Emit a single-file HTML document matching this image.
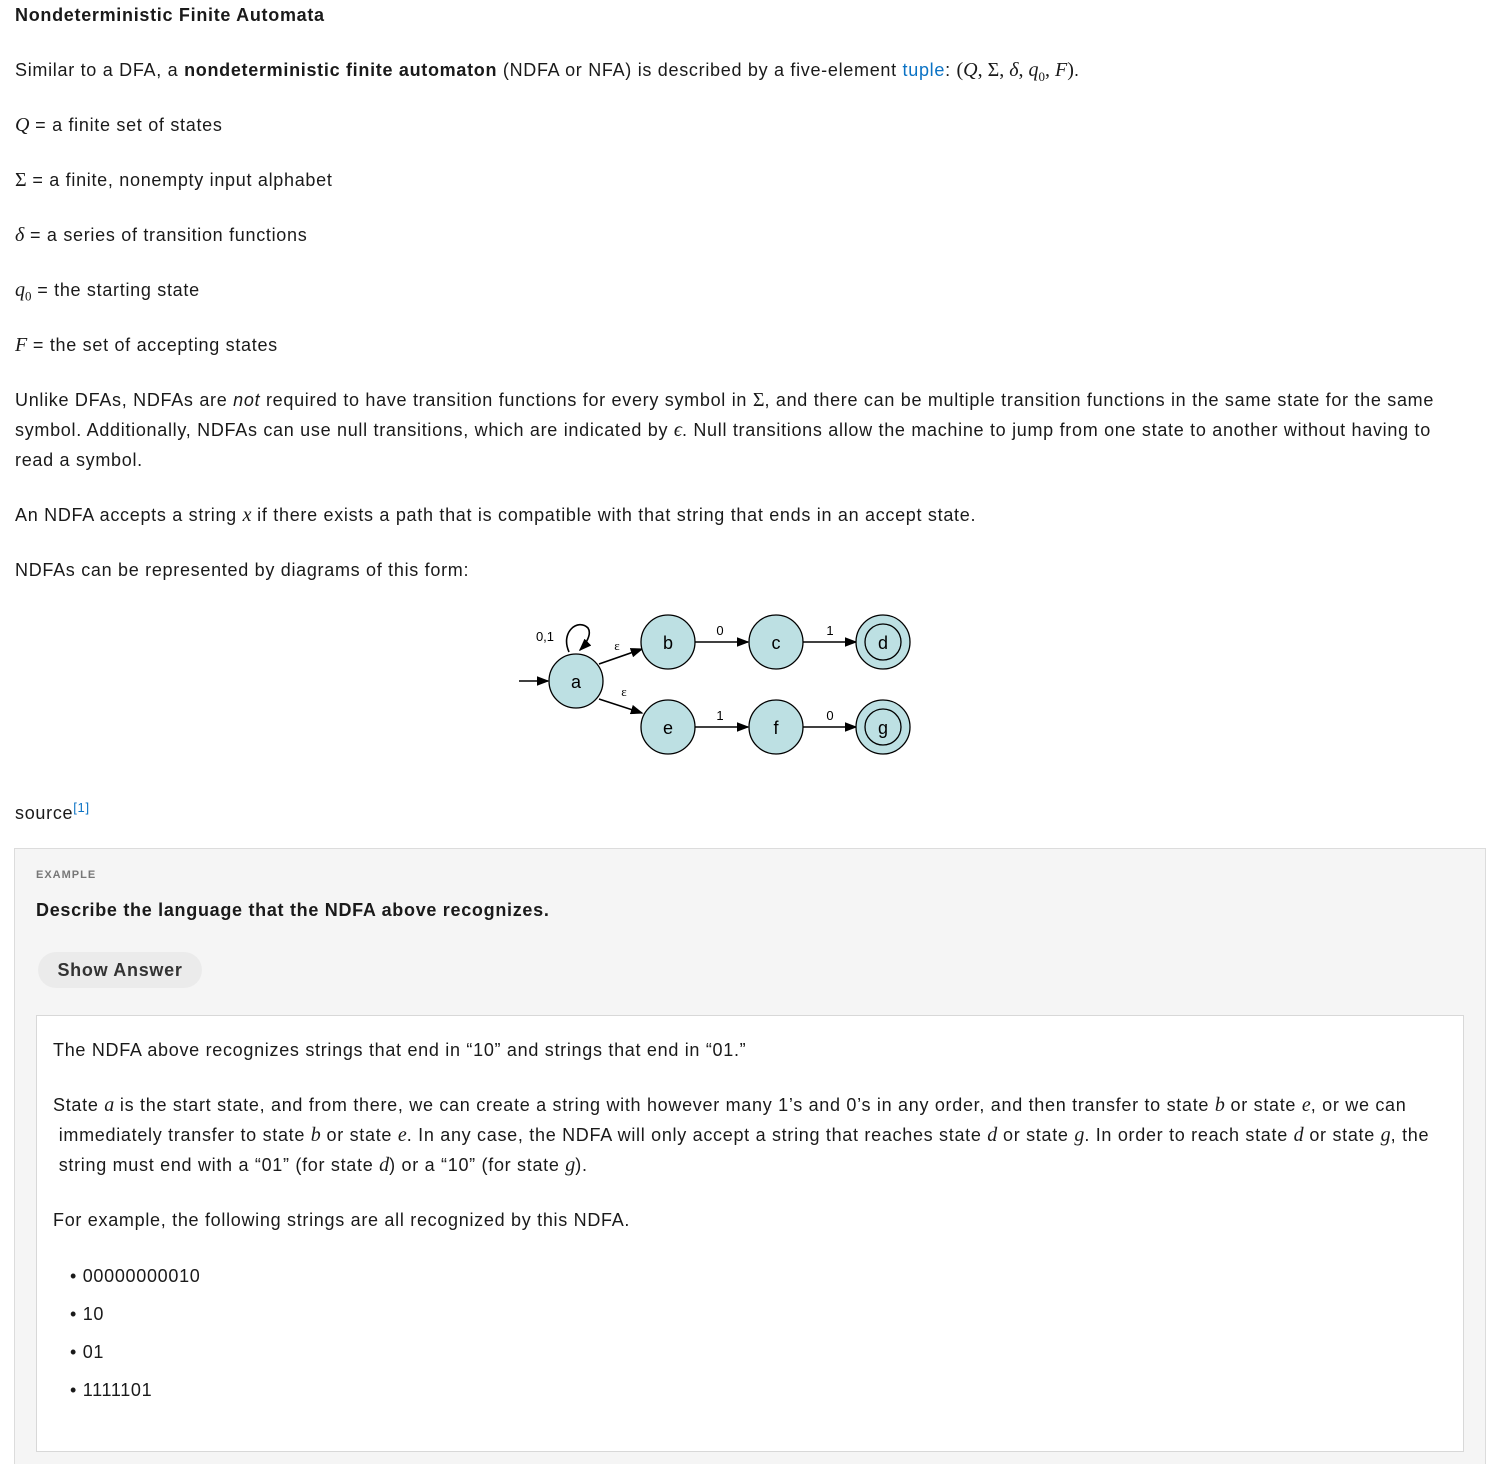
<!DOCTYPE html>
<html><head><meta charset="utf-8"><style>
html,body{margin:0;overflow:hidden}
body{background:#fff;font-family:"Liberation Sans",sans-serif;color:#1a1a1a;font-size:18px;width:1511px;height:1464px;position:relative;letter-spacing:0.7px}
.p{position:absolute;left:15px;line-height:30px;white-space:nowrap}
.m{font-family:"Liberation Serif",serif;font-style:italic;font-size:20px;letter-spacing:0}
.r{font-family:"Liberation Serif",serif;font-size:20px;letter-spacing:0}
a{color:#0a72c4;text-decoration:none}
.box{position:absolute;left:14px;top:848px;width:1470px;height:640px;background:#f5f5f5;border:1px solid #dcdcdc}
.ans{position:absolute;left:36px;top:1015px;width:1426px;height:435px;background:#fff;border:1px solid #d8d8d8}
.li{position:absolute;left:70px;line-height:30px}
</style></head><body>
<div class="p" style="top:0;font-weight:bold;font-size:18px">Nondeterministic Finite Automata</div>
<div class="p" style="top:55px">Similar to a DFA, a <b>nondeterministic finite automaton</b> (NDFA or NFA) is described by a five-element <a>tuple</a>: <span class="r">(<i>Q</i>, Σ, <i>δ</i>, <i>q</i><sub style="font-size:13px">0</sub>, <i>F</i>)</span>.</div>
<div class="p" style="top:110px"><span class="m">Q</span> = a finite set of states</div>
<div class="p" style="top:165px"><span class="r">Σ</span> = a finite, nonempty input alphabet</div>
<div class="p" style="top:220px"><span class="m">δ</span> = a series of transition functions</div>
<div class="p" style="top:275px"><span class="m">q</span><sub style="font-size:13px" class="r">0</sub> = the starting state</div>
<div class="p" style="top:330px"><span class="m">F</span> = the set of accepting states</div>
<div class="p" style="top:385px">Unlike DFAs, NDFAs are <i>not</i> required to have transition functions for every symbol in <span class="r">Σ</span>, and there can be multiple transition functions in the same state for the same<br>symbol. Additionally, NDFAs can use null transitions, which are indicated by <span class="m">ϵ</span>. Null transitions allow the machine to jump from one state to another without having to<br>read a symbol.</div>
<div class="p" style="top:500px">An NDFA accepts a string <span class="m">x</span> if there exists a path that is compatible with that string that ends in an accept state.</div>
<div class="p" style="top:555px">NDFAs can be represented by diagrams of this form:</div>
<svg style="position:absolute;left:510px;top:600px" width="420" height="170" viewBox="510 600 420 170" font-family="Liberation Sans,sans-serif">
<defs><marker id="ar" markerWidth="8" markerHeight="6" refX="7" refY="3" orient="auto"><path d="M0,0L8,3L0,6z" fill="#000"/></marker></defs>
<g stroke="#000" stroke-width="1.6" fill="none">
<line x1="519" y1="681" x2="548" y2="681" marker-end="url(#ar)"/>
<line x1="599" y1="664" x2="642" y2="649" marker-end="url(#ar)"/>
<line x1="599" y1="699" x2="642" y2="713" marker-end="url(#ar)"/>
<line x1="695" y1="642" x2="748" y2="642" marker-end="url(#ar)"/>
<line x1="803" y1="642" x2="856" y2="642" marker-end="url(#ar)"/>
<line x1="695" y1="727" x2="748" y2="727" marker-end="url(#ar)"/>
<line x1="803" y1="727" x2="856" y2="727" marker-end="url(#ar)"/>
<path d="M569 652 C560 632 578 618 588 628 C592 634 586 644 580 650" marker-end="url(#ar)"/>
</g>
<g fill="#bde0e3" stroke="#000" stroke-width="1.3">
<circle cx="576" cy="681" r="27"/><circle cx="668" cy="642" r="27"/><circle cx="776" cy="642" r="27"/><circle cx="883" cy="642" r="27"/>
<circle cx="668" cy="727" r="27"/><circle cx="776" cy="727" r="27"/><circle cx="883" cy="727" r="27"/>
<circle cx="883" cy="642" r="18"/><circle cx="883" cy="727" r="18"/>
</g>
<g font-size="18" text-anchor="middle" fill="#000" style="letter-spacing:0">
<text x="576" y="688">a</text><text x="668" y="649">b</text><text x="776" y="649">c</text><text x="883" y="649">d</text>
<text x="668" y="734">e</text><text x="776" y="734">f</text><text x="883" y="734">g</text>
</g>
<g font-size="13" text-anchor="middle" fill="#000" style="letter-spacing:0">
<text x="545" y="641">0,1</text><text x="720" y="635">0</text><text x="830" y="635">1</text>
<text x="720" y="720">1</text><text x="830" y="720">0</text>
<text x="617" y="650" font-family="Liberation Serif,serif">ε</text><text x="624" y="696" font-family="Liberation Serif,serif">ε</text>
</g>
</svg>
<div class="p" style="top:793px">source<sup style="font-size:13px"><a>[1]</a></sup></div>
<div class="box"></div>
<div class="p" style="top:860px;left:36px;font-size:11px;font-weight:bold;color:#777;letter-spacing:1px">EXAMPLE</div>
<div class="p" style="top:895px;left:36px;font-weight:bold">Describe the language that the NDFA above recognizes.</div>
<div style="position:absolute;left:38px;top:952px;width:164px;height:36px;border-radius:18px;background:#ebebeb;font-weight:bold;color:#333;line-height:36px;text-align:center;font-size:18px">Show Answer</div>
<div class="ans"></div>
<div class="p" style="top:1035px;left:53px">The NDFA above recognizes strings that end in “10” and strings that end in “01.”</div>
<div class="p" style="top:1090px;left:53px">State <span class="m">a</span> is the start state, and from there, we can create a string with however many 1’s and 0’s in any order, and then transfer to state <span class="m">b</span> or state <span class="m">e</span>, or we can<br>&nbsp;immediately transfer to state <span class="m">b</span> or state <span class="m">e</span>. In any case, the NDFA will only accept a string that reaches state <span class="m">d</span> or state <span class="m">g</span>. In order to reach state <span class="m">d</span> or state <span class="m">g</span>, the<br>&nbsp;string must end with a “01” (for state <span class="m">d</span>) or a “10” (for state <span class="m">g</span>).</div>
<div class="p" style="top:1205px;left:53px">For example, the following strings are all recognized by this NDFA.</div>
<div class="li" style="top:1261px">• 00000000010</div>
<div class="li" style="top:1299px">• 10</div>
<div class="li" style="top:1337px">• 01</div>
<div class="li" style="top:1375px">• 1111101</div>
</body></html>
